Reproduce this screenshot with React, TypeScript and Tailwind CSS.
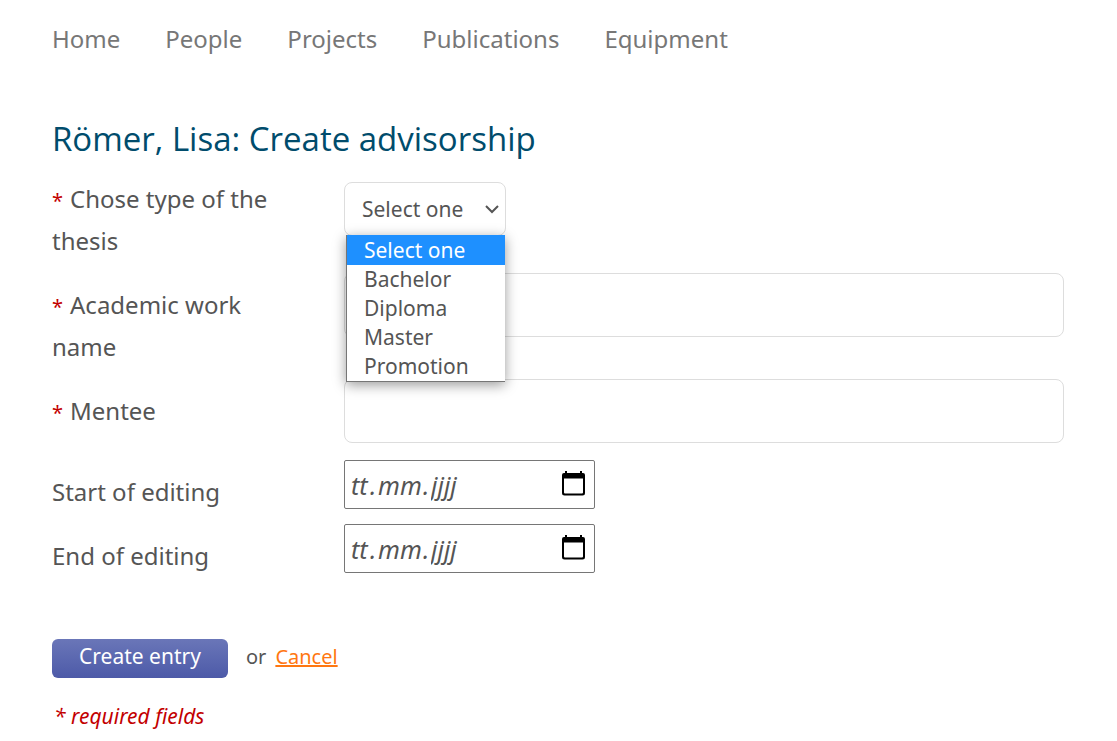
import React, { useState } from "react";

const navItems = ["Home", "People", "Projects", "Publications", "Equipment"];
const thesisTypes = ["Select one", "Bachelor", "Diploma", "Master", "Promotion"];

function Required() {
  return <span className="mr-[7px] text-xl leading-none text-[#c30000]">*</span>;
}

function TextRow({ id, label }: { id: string; label: string }) {
  return (
    <div className="flex items-start">
      <label htmlFor={id} className="w-[292px] shrink-0 pt-[11px] pr-16">
        <Required />
        {label}
      </label>
      <input
        id={id}
        type="text"
        className="h-16 min-w-0 flex-1 rounded-lg border border-[#dddddd] bg-white px-4"
      />
    </div>
  );
}

function DateRow({ id, label }: { id: string; label: string }) {
  return (
    <div className="flex items-start">
      <label htmlFor={id} className="w-[292px] shrink-0 pt-[11px]">
        {label}
      </label>
      <div className="flex h-[49px] w-[251px] items-center rounded-xs border border-[#767676] bg-white pr-2 pl-1.5 text-[25px] italic">
        <input
          id={id}
          type="text"
          placeholder="tt"
          className="w-[19px] outline-none placeholder:text-[#555555]"
        />
        <span className="w-2">.</span>
        <input
          type="text"
          aria-label={`${label}: month`}
          placeholder="mm"
          className="w-[45px] outline-none placeholder:text-[#555555]"
        />
        <span className="w-2">.</span>
        <input
          type="text"
          aria-label={`${label}: year`}
          placeholder="jjjj"
          className="min-w-0 flex-1 outline-none placeholder:text-[#555555]"
        />
        <button type="button" aria-label={`${label}: open calendar`} className="shrink-0 pb-1">
          <svg width="25" height="26" viewBox="0 0 25 26" fill="none">
            <path d="M4 1h2v3H4zM19 1h2v3h-2z" fill="#000" />
            <path
              d="M3 3h19a2 2 0 0 1 2 2v18a2.500 2.500 0 0 1-2.500 2.500h-18A2.500 2.500 0 0 1 1 23V5a2 2 0 0 1 2-2zM3 8.500v14a1 1 0 0 0 1 1h17a1 1 0 0 0 1-1v-14z"
              fill="#000"
              fillRule="evenodd"
            />
          </svg>
        </button>
      </div>
    </div>
  );
}

export default function App() {
  const [type, setType] = useState(thesisTypes[0]);
  return (
    <div className="min-h-screen bg-white pt-[18px] pr-[53px] pl-[52px] font-['Noto_Sans','Open_Sans',sans-serif] text-[#555555]">
      <nav className="flex gap-[45px] text-2xl leading-[42px] text-[#777777]">
        {navItems.map((item) => (
          <a key={item} href="#">
            {item}
          </a>
        ))}
      </nav>

      <main className="pt-14">
        <h1 className="font-['Open_Sans',sans-serif] text-[33px] leading-[46px] text-[#004c6c]">
          Römer, Lisa: Create advisorship
        </h1>

        <form className="pt-4 text-2xl leading-[42px]" onSubmit={(e) => e.preventDefault()}>
          <div className="flex flex-col gap-[11px]">
            <div className="flex items-start">
              <label htmlFor="type" className="w-[292px] shrink-0 pr-16">
                <Required />
                Chose type of the thesis
              </label>
              <div className="relative mt-1 w-[162px]">
                <select
                  id="type"
                  value={type}
                  onChange={(e) => setType(e.target.value)}
                  className="h-[54px] w-full appearance-none rounded-lg border border-[#dddddd] bg-white pl-[17px] text-[21px] leading-[30px]"
                >
                  {thesisTypes.map((t) => (
                    <option key={t}>{t}</option>
                  ))}
                </select>
                <svg
                  className="pointer-events-none absolute top-5 right-[7px]"
                  width="14"
                  height="14"
                  viewBox="0 0 14 14"
                  fill="none"
                  stroke="#555555"
                  strokeWidth="2"
                >
                  <path d="M1 4l6 6 6-6" />
                </svg>
                <ul
                  role="listbox"
                  aria-label="Type of the thesis"
                  className="absolute top-[53px] left-0.5 z-10 w-[159px] border border-t-0 border-r-0 border-[#767676] bg-white text-[21px] leading-[29px] shadow-[0_3px_12px_rgba(0,0,0,0.4)]"
                >
                  {thesisTypes.map((t) => (
                    <li
                      key={t}
                      role="option"
                      aria-selected={t === type}
                      onClick={() => setType(t)}
                      className="pl-[17px] aria-selected:bg-[#1e90ff] aria-selected:pt-px aria-selected:text-white"
                    >
                      {t}
                    </li>
                  ))}
                </ul>
              </div>
            </div>
            <TextRow id="work" label="Academic work name" />
            <TextRow id="mentee" label="Mentee" />
          </div>

          <div className="mt-[17px] flex flex-col gap-[11px]">
            <DateRow id="start" label="Start of editing" />
            <DateRow id="end" label="End of editing" />
          </div>

          <div className="mt-[62px] flex items-start text-xl leading-[35px]">
            <button
              type="submit"
              className="h-[39px] w-44 rounded-md bg-linear-to-b from-[#6a76b8] to-[#4d5aa8] pb-1 text-[21px] text-white"
            >
              Create entry
            </button>
            <span className="ml-[18px]">or</span>
            <a href="#" className="ml-[9px] text-[#ff7711] underline">
              Cancel
            </a>
          </div>

          <p className="mt-[23px] pl-0.5 text-[21px] leading-[30px] text-[#c30000] italic">* required fields</p>
        </form>
      </main>
    </div>
  );
}
